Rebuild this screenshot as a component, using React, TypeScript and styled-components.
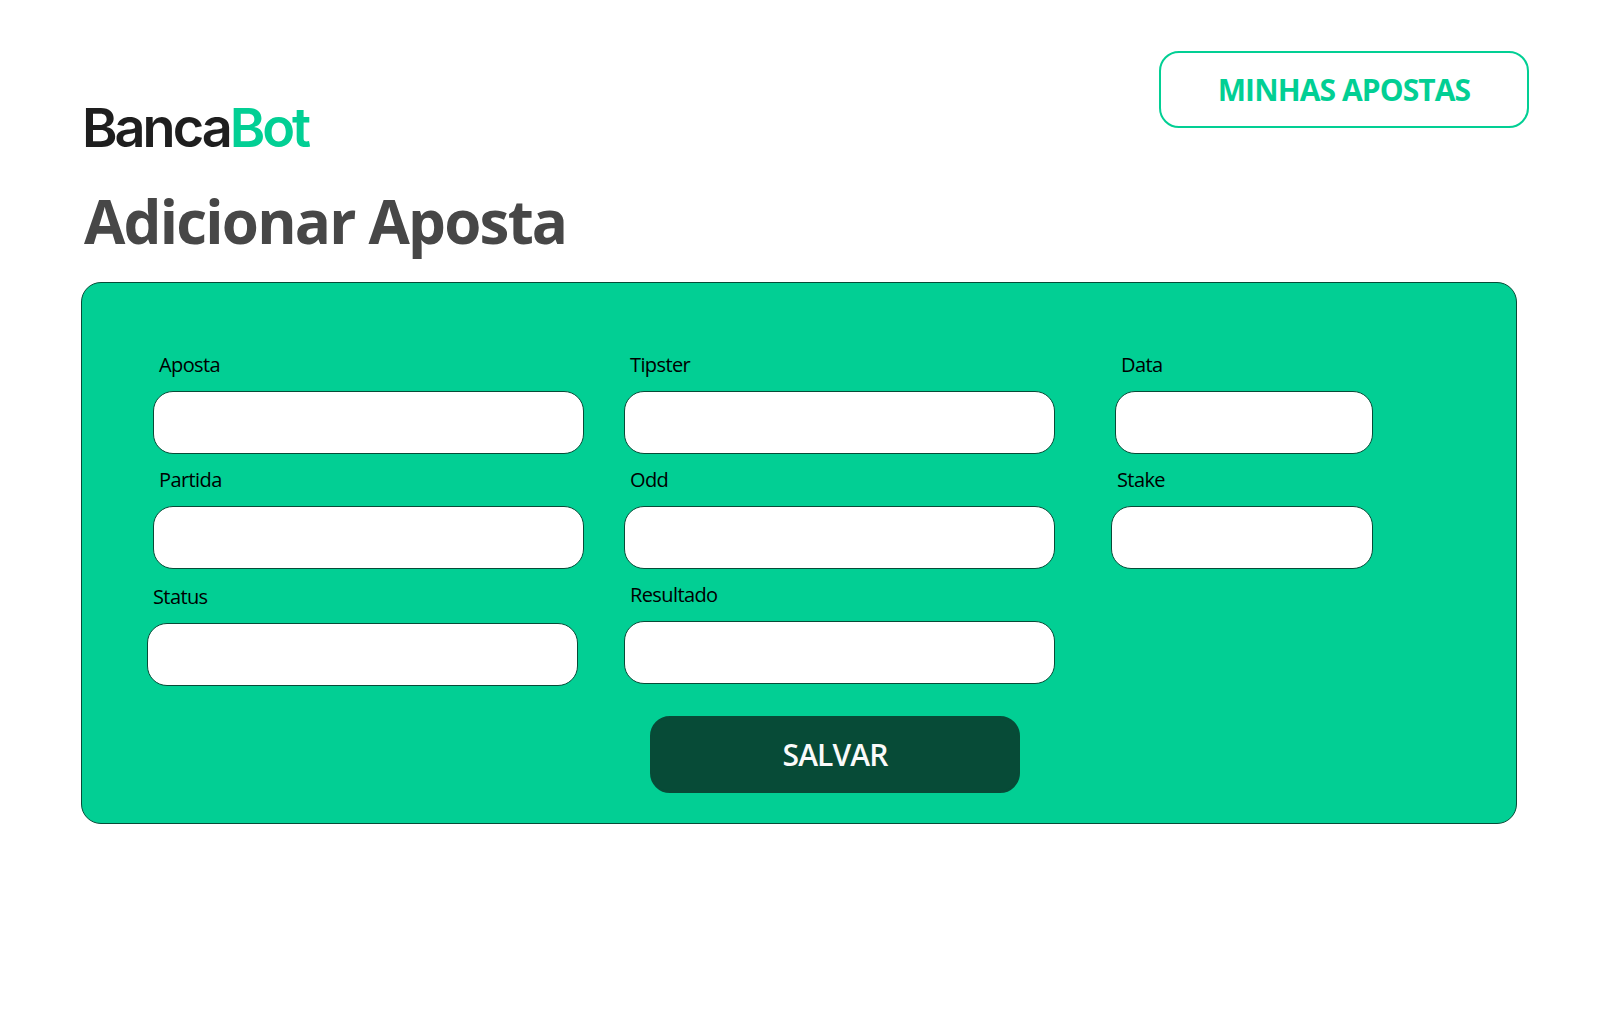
import React from 'react';
import styled, { createGlobalStyle } from 'styled-components';

const GlobalStyle = createGlobalStyle`
  * { box-sizing: border-box; }
  body {
    margin: 0;
    background: #ffffff;
    font-family: 'Open Sans', 'Noto Sans', sans-serif;
  }
`;

const Page = styled.div`
  width: 1598px;
  height: 1024px;
  padding: 51px 69px 0 81px;
  overflow: hidden;
`;

const Header = styled.header`
  display: flex;
  justify-content: space-between;
  align-items: flex-start;
  height: 129px;
`;

const Logo = styled.div`
  padding: 44px 0 0 1px;
  font-family: Inter, sans-serif;
  font-size: 54px;
  line-height: 66px;
  font-weight: 600;
  letter-spacing: -3px;
  color: #1e1e1e;
`;

const LogoAccent = styled.span`
  color: #02cf94;
`;

const Button = styled.button<{ $solid?: boolean }>`
  display: flex;
  align-items: center;
  justify-content: center;
  width: 370px;
  height: 77px;
  padding: 0;
  border: 2px solid ${(p) => (p.$solid ? '#074b37' : '#02cf94')};
  border-radius: 20px;
  background: ${(p) => (p.$solid ? '#074b37' : '#ffffff')};
  color: ${(p) => (p.$solid ? '#fafafa' : '#02cf94')};
  font-family: inherit;
  font-size: 30px;
  line-height: 42px;
  font-weight: ${(p) => (p.$solid ? 600 : 700)};
  letter-spacing: -0.9px;
`;

const Title = styled.h1`
  margin: 0;
  padding-left: 3px;
  height: 102px;
  font-size: 60px;
  line-height: 82px;
  font-weight: 700;
  letter-spacing: -1.8px;
  color: #474747;
`;

const Panel = styled.form`
  width: 1436px;
  height: 542px;
  padding: 68px 0 0 71px;
  border: 1px solid #074b37;
  border-radius: 20px;
  background: #02cf94;
`;

const Columns = styled.div`
  display: flex;
  gap: 40px;
`;

const Column = styled.div<{ $align?: string; $gap?: number }>`
  display: flex;
  flex-direction: column;
  align-items: ${(p) => p.$align ?? 'flex-start'};
  gap: 12px;
  margin-left: ${(p) => p.$gap ?? 0}px;
`;

const Field = styled.label<{ $width: number; $shifted?: boolean }>`
  display: flex;
  flex-direction: column;
  gap: 12px;
  width: ${(p) => p.$width}px;
  margin: ${(p) => (p.$shifted ? '2px 0 0 -6px' : '0')};
`;

const LabelText = styled.span`
  padding-left: 6px;
  font-size: 20px;
  line-height: 28px;
  font-weight: 500;
  letter-spacing: -0.6px;
  color: #000000;
`;

const Input = styled.input`
  width: 100%;
  height: 63px;
  padding: 0 20px;
  border: 1px solid #074b37;
  border-radius: 20px;
  background: #ffffff;
  font: inherit;
  font-size: 20px;
  outline: none;
`;

const Actions = styled.div`
  display: flex;
  padding: 30px 0 0 497px;
`;

function TextField({ label, width = 431, shifted }: { label: string; width?: number; shifted?: boolean }) {
  return (
    <Field $width={width} $shifted={shifted}>
      <LabelText>{label}</LabelText>
      <Input type="text" />
    </Field>
  );
}

export default function App() {
  return (
    <Page>
      <GlobalStyle />
      <Header>
        <Logo>
          Banca<LogoAccent>Bot</LogoAccent>
        </Logo>
        <Button type="button">MINHAS APOSTAS</Button>
      </Header>
      <Title>Adicionar Aposta</Title>
      <Panel onSubmit={(e) => e.preventDefault()}>
        <Columns>
          <Column>
            <TextField label="Aposta" />
            <TextField label="Partida" />
            <TextField label="Status" shifted />
          </Column>
          <Column>
            <TextField label="Tipster" />
            <TextField label="Odd" />
            <TextField label="Resultado" />
          </Column>
          <Column $align="flex-end" $gap={16}>
            <TextField label="Data" width={258} />
            <TextField label="Stake" width={262} />
          </Column>
        </Columns>
        <Actions>
          <Button type="submit" $solid>
            SALVAR
          </Button>
        </Actions>
      </Panel>
    </Page>
  );
}
